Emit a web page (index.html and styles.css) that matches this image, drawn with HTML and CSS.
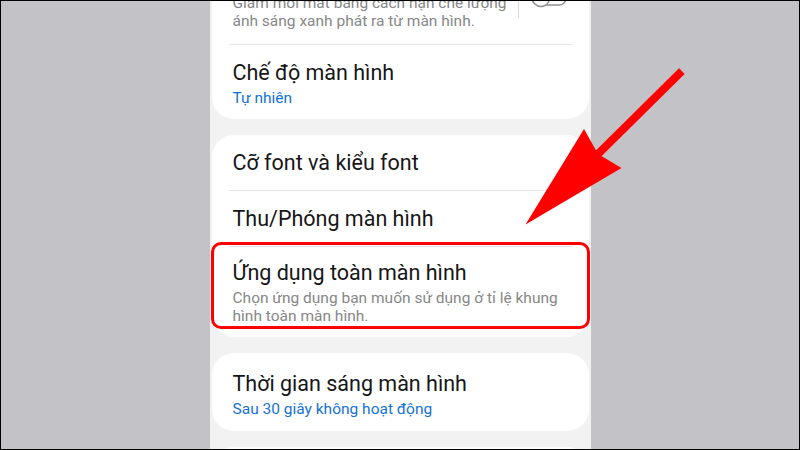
FILE: index.html
```html
<!DOCTYPE html>
<html lang="vi">
<head>
<meta charset="utf-8">
<title>Màn hình</title>
<link rel="stylesheet" href="styles.css">
</head>
<body>
<div class="frame">
  <div class="phone">
    <div class="list">
      <section class="card card-first">
        <div class="item item-toggle">
          <div class="text">
            <div class="title">Bộ lọc ánh sáng xanh</div>
            <div class="sub">Giảm mỏi mắt bằng cách hạn chế lượng<br>ánh sáng xanh phát ra từ màn hình.</div>
          </div>
          <span class="vdiv"></span>
          <svg class="toggle" width="36" height="20" viewBox="0 0 36 20">
            <rect x="1" y="3" width="34" height="14" rx="7" fill="none" stroke="#8e8e8e" stroke-width="1.4"/>
            <circle cx="10" cy="10" r="8.5" fill="#fff" stroke="#8e8e8e" stroke-width="1.4"/>
          </svg>
        </div>
        <div class="divider"></div>
        <div class="item item-end">
          <div class="title">Chế độ màn hình</div>
          <div class="sub sub-blue">Tự nhiên</div>
        </div>
      </section>

      <section class="card">
        <div class="item">
          <div class="title">Cỡ font và kiểu font</div>
        </div>
        <div class="divider"></div>
        <div class="item">
          <div class="title">Thu/Phóng màn hình</div>
        </div>
        <div class="divider"></div>
        <div class="item item-end item-highlight">
          <div class="title">Ứng dụng toàn màn hình</div>
          <div class="sub">Chọn ứng dụng bạn muốn sử dụng ở tỉ lệ khung<br>hình toàn màn hình.</div>
          <span class="highlight"></span>
        </div>
      </section>

      <section class="card">
        <div class="item item-tall">
          <div class="title">Thời gian sáng màn hình</div>
          <div class="sub sub-blue">Sau 30 giây không hoạt động</div>
        </div>
      </section>

      <section class="card">
        <div class="item item-tall">
          <div class="title">Thanh điều hướng</div>
        </div>
      </section>
    </div>
  </div>

  <svg class="arrow" width="800" height="450" viewBox="0 0 800 450">
    <line x1="679" y1="74" x2="600" y2="152" stroke="#ff0000" stroke-width="8" stroke-linecap="square"/>
    <polygon points="525.5,224.5 584,129 598,154 621.5,168" fill="#ff0000"/>
  </svg>
</div>
</body>
</html>
```

FILE: styles.css
```css
html, body {
  margin: 0;
  padding: 0;
}

body {
  font-family: Roboto, "Noto Sans", "Liberation Sans", sans-serif;
}

.frame {
  position: relative;
  width: 800px;
  height: 450px;
  box-sizing: border-box;
  border: 1px solid #000;
  background: #c3c2c7;
  display: flex;
  justify-content: center;
  overflow: hidden;
}

.phone {
  width: 381px;
  height: 100%;
  background: #f2f2f2;
  overflow: hidden;
}

.list {
  display: flex;
  flex-direction: column;
  gap: 16px;
  padding: 0 2px;
}

.card {
  background: #fff;
  border-radius: 22px;
  display: flex;
  flex-direction: column;
}

.card-first {
  margin-top: -51px;
}

.item {
  position: relative;
  padding: 16px 22px 15px 21px;
}

.item-end {
  padding-bottom: 12px;
}

.item-highlight {
  padding-top: 14px;
}

.item-tall {
  padding-top: 19px;
  padding-bottom: 13px;
}

.item-toggle {
  display: flex;
  align-items: center;
  padding-bottom: 14px;
  padding-right: 22px;
}

.text {
  flex: 1;
}

.title {
  font-size: 21.5px;
  line-height: 24px;
  color: #161616;
}

.sub {
  margin-top: 4px;
  font-size: 15.5px;
  line-height: 18px;
  color: #878787;
}

.sub-blue {
  color: #1571d6;
}

.divider {
  height: 1px;
  background: #e6e6e6;
  margin: 0 16px 0 17px;
}

.vdiv {
  width: 1px;
  height: 40px;
  background: #d9d9d9;
  margin: 0 12px 0 8px;
}

.toggle {
  display: block;
}

.highlight {
  position: absolute;
  top: -5px;
  bottom: 8px;
  left: -1px;
  right: -1px;
  border: 3.5px solid #ff0000;
  border-radius: 10px;
}

.arrow {
  position: absolute;
  top: -1px;
  left: -1px;
  pointer-events: none;
}
```
